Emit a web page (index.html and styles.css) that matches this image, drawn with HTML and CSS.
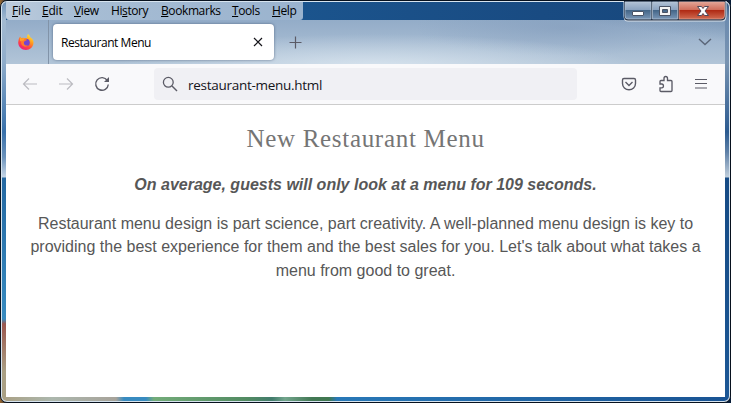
FILE: index.html
```html
<!DOCTYPE html>
<html lang="en">
<head>
<meta charset="utf-8">
<title>Restaurant Menu</title>
<link rel="stylesheet" href="styles.css">
</head>
<body>
<div class="window">
  <div class="glass">
    <header class="titlebar">
      <nav class="menubar">
        <span class="m-file"><u>F</u>ile</span>
        <span class="m-edit"><u>E</u>dit</span>
        <span class="m-view"><u>V</u>iew</span>
        <span class="m-history">Hi<u>s</u>tory</span>
        <span class="m-bookmarks"><u>B</u>ookmarks</span>
        <span class="m-tools"><u>T</u>ools</span>
        <span class="m-help"><u>H</u>elp</span>
      </nav>
      <svg class="controls" width="104" height="21" viewBox="0 0 104 21">
        <defs>
          <linearGradient id="blue" x2="0" y2="1"><stop offset="0" stop-color="#b0c1d5"/><stop offset=".46" stop-color="#8aa2bf"/><stop offset=".5" stop-color="#456789"/><stop offset="1" stop-color="#7895b5"/></linearGradient>
          <linearGradient id="red" x2="0" y2="1"><stop offset="0" stop-color="#e3a496"/><stop offset=".46" stop-color="#cf6d5a"/><stop offset=".5" stop-color="#b02b15"/><stop offset="1" stop-color="#d06a50"/></linearGradient>
        </defs>
        <path d="M.5 0V15Q.5 20.500 5 20.500H99Q103.500 20.500 103.500 15V0Z" fill="#d9e1ea"/>
        <path d="M1 0V15Q1 19.500 5 19.500H98Q102.500 19.500 102.500 15V0Z" fill="#26354a"/>
        <path d="M2 1H28V18H5Q2 18 2 15Z" fill="url(#blue)" stroke="#bccada" stroke-width=".7"/>
        <path d="M29.500 1H54.500V18H29.500Z" fill="url(#blue)" stroke="#bccada" stroke-width=".7"/>
        <path d="M56 1H101.500V15Q101.500 18 98 18H56Z" fill="url(#red)" stroke="#e2a99c" stroke-width=".7"/>
        <rect x="9.500" y="10.500" width="11" height="4" rx=".5" fill="#fff" stroke="#4a5365"/>
        <path d="M36.500 5.500H47.500V14.500H36.500ZM39.500 8.500V11.500H44.500V8.500Z" fill="#f4f4f4" fill-rule="evenodd" stroke="#4a5365"/>
        <path d="M74.500 5.500H78.500L80 7.500L81.500 5.500H85.500L82 10L85.500 14.500H81.500L80 12.500L78.500 14.500H74.500L78 10Z" fill="#fff" stroke="#514858"/>
      </svg>
    </header>
    <div class="tabs">
      <div class="pinned">
        <svg width="18" height="18" viewBox="0 0 18 18">
          <defs>
            <linearGradient id="flame" x1=".85" y1="0" x2=".25" y2="1"><stop stop-color="#fff43d"/><stop offset=".4" stop-color="#ff9a20"/><stop offset=".7" stop-color="#ff4541"/><stop offset="1" stop-color="#ec1885"/></linearGradient>
          </defs>
          <path d="M11 1Q13 2.500 13.500 4.500Q16.800 6.200 16.500 10C16.200 14 13 17 9 17C4.700 17 1.200 13.700 1.200 9.500Q1.200 6 3 3.500L4 5Q6 4.300 8 5L10 5Q9.800 2.500 11 1Z" fill="url(#flame)"/>
          <circle cx="9" cy="9.500" r="3.800" fill="#7543cf"/>
          <path d="M2.500 6Q5 4 8 6Q10 6.200 10 7Q8.500 8 7.500 8.200Q6.500 9.500 7 11Q8 13 11 12.500Q9.500 14.200 7.200 13.500Q4 12.500 4 9Z" fill="#ff792b"/>
          <path d="M3 4L4.500 5.500L7.500 5L6.500 7.500L3 8Z" fill="#ffa226"/>
        </svg>
      </div>
      <div class="tab">
        <span class="tab-title">Restaurant Menu</span>
        <svg width="10" height="10" viewBox="0 0 10 10"><path d="M1 1L9 9M9 1L1 9" fill="none" stroke="#15141a" stroke-width="1.200"/></svg>
      </div>
      <svg class="plus" width="13" height="13" viewBox="0 0 13 13"><path d="M6.500 .5V12.500M.5 6.500H12.500" stroke="#5b5b66" stroke-width="1.200"/></svg>
      <svg class="chevron" width="14" height="8" viewBox="0 0 14 8"><path d="M1 1L7 6.500L13 1" fill="none" stroke="#5b6678" stroke-width="1.400"/></svg>
    </div>
    <div class="toolbar">
      <svg class="back" width="16" height="14" viewBox="0 0 16 14"><path d="M15 7H1.500M7 1.500L1.500 7L7 12.500" fill="none" stroke="#bcbcc1" stroke-width="1.200"/></svg>
      <svg class="forward" width="16" height="14" viewBox="0 0 16 14"><path d="M1 7H14.500M9 1.500L14.500 7L9 12.500" fill="none" stroke="#bcbcc1" stroke-width="1.200"/></svg>
      <svg class="reload" width="16" height="16" viewBox="0 0 16 16"><path d="M13.300 4.500A6.300 6.300 0 1 0 14.300 8.500" fill="none" stroke="#5b5b66" stroke-width="1.400"/><path d="M15 1V6H10Z" fill="#5b5b66"/></svg>
      <div class="address">
        <svg width="16" height="16" viewBox="0 0 16 16"><circle cx="6.300" cy="6.300" r="4.900" fill="none" stroke="#5b5b66" stroke-width="1.300"/><path d="M10 10L15 15" stroke="#5b5b66" stroke-width="1.400"/></svg>
        <span class="url">restaurant-menu.html</span>
      </div>
      <svg class="pocket" width="16" height="16" viewBox="0 0 16 16"><path d="M3 2.500H13Q14.500 2.500 14.500 4V7.500A6.500 6.300 0 0 1 1.500 7.500V4Q1.500 2.500 3 2.500Z" fill="none" stroke="#5b5b66" stroke-width="1.400"/><path d="M4.500 6L8 9.400L11.500 6" fill="none" stroke="#5b5b66" stroke-width="1.400"/></svg>
      <svg class="puzzle" width="16" height="18" viewBox="0 0 16 18"><path d="M2 9V6.500Q2 5.500 3 5.500H6V3.500Q6 1.500 7.700 1.500Q9.500 1.500 9.500 3.500V5.500H13Q14 5.500 14 6.500V15.500Q14 16.500 13 16.500H3Q2 16.500 2 15.500V12.800H4Q5.500 12.500 5.500 11Q5.500 9.200 4 9Z" fill="none" stroke="#5b5b66" stroke-width="1.350"/></svg>
      <svg class="burger" width="12" height="12" viewBox="0 0 12 12"><path d="M0 1.500H12M0 5.500H12M0 10H12" stroke="#5b5b66" stroke-width="1.200"/></svg>
    </div>
    <main class="page">
      <h1>New Restaurant Menu</h1>
      <p class="lead">On average, guests will only look at a menu for 109 seconds.</p>
      <p>Restaurant menu design is part science, part creativity. A well-planned menu design is key to providing the best experience for them and the best sales for you. Let's talk about what takes a menu from good to great.</p>
    </main>
  </div>
</div>
</body>
</html>
```
FILE: styles.css
```css
* { box-sizing: border-box; }
body { margin: 0; background: linear-gradient(90deg, #9a682f, #071c38 8px); overflow: hidden; }
svg { display: block; flex: none; }
.window {
  width: 731px;
  height: 403px;
  border: 1px solid #07111e;
  border-radius: 7px;
  background: #d7e4ef;
  padding: 1px;
}
.glass {
  height: 399px;
  padding: 0 4px 4px;
  border-radius: 5px;
  background:
    linear-gradient(90deg, #aaa084 0, #acb7ad 50px, #a7a39a 114px, #388bc0 122px, #388bc0 144px, #73ac79 152px, #528b62 245px, #427c6c 270px, #72a58c 283px, #427854 310px, #407850 327px, #2878b7 335px, #195393 727px) 0 100% / 100% 4px no-repeat,
    linear-gradient(#6f94bb 0, #a3bad1 18px, #8facca 60px, #3870aa 130px, #6b92bb 155px, #c5d5e6 175px, #2468a2 176px, #388bc0 317px, #9b574e 322px, #aaa084 370px) 0 0 / 4px 100% no-repeat,
    linear-gradient(#30567f 0, #6c8baf 18px, #7893b1 60px, #2c5b90 130px, #5e80a7 150px, #c0cedb 175px, #164b85 176px, #1c5795 399px) 100% 0 / 4px 100% no-repeat,
    linear-gradient(90deg, #17518e, #1b548d 300px, #194b82 540px, #17477c);
}
.titlebar { display: flex; justify-content: space-between; height: 18px; }
.menubar {
  display: flex;
  width: 297px;
  height: 18px;
  padding-left: 6px;
  border-radius: 0 0 3px 3px;
  background: linear-gradient(90deg, #bdccdd, #a7bdd4 70px, #9ab3ce);
  font: 12px/18px "Open Sans", sans-serif;
  letter-spacing: -.4px;
  color: #000;
}
.menubar u { text-underline-offset: 1px; text-decoration-thickness: 1px; }
.m-file { width: 30px; letter-spacing: -.1px; }
.m-edit { width: 32px; letter-spacing: -.2px; }
.m-view { width: 37px; }
.m-history { width: 50px; }
.m-bookmarks { width: 71px; }
.m-tools { width: 40px; }
.controls { margin: -1px -2px 0 0; position: relative; }
.tabs {
  display: flex;
  align-items: center;
  height: 44px;
  background:
    radial-gradient(ellipse 260px 34px at 370px 48px, rgba(222, 233, 242, .85), rgba(222, 233, 242, 0)),
    radial-gradient(ellipse 150px 28px at 560px 8px, rgba(120, 146, 180, .4), rgba(120, 146, 180, 0)),
    linear-gradient(8deg, transparent 72%, rgba(107, 137, 171, .55)) 100% 0 / 260px 100% no-repeat,
    linear-gradient(#93acc8, #b2c5d8);
}
.pinned { display: flex; align-items: center; width: 43px; height: 44px; padding-left: 11px; border-right: 1px solid #8193a8; }
.tab {
  display: flex;
  align-items: center;
  justify-content: space-between;
  width: 221px;
  height: 36px;
  margin-left: 4px;
  padding: 0 11px 0 8px;
  border-radius: 4px;
  background: #fff;
  box-shadow: 0 0 3px rgba(40, 60, 90, .6);
  font: 12px/18px "Open Sans", sans-serif;
  letter-spacing: -.45px;
  color: #000;
}
.tab-title { padding-top: 2px; }
.plus { margin-left: 15px; }
.chevron { margin: 0 13px 0 auto; }
.toolbar {
  display: flex;
  align-items: center;
  height: 41px;
  background: #f9f9fb;
  border-bottom: 1px solid #ccc;
}
.back { margin-left: 16px; }
.forward { margin-left: 20px; }
.reload { margin-left: 20px; }
.address {
  display: flex;
  align-items: center;
  gap: 10px;
  width: 423px;
  height: 32px;
  margin-left: 44px;
  padding-left: 8px;
  border-radius: 4px;
  background: #f0f0f4;
  font: 13.5px/20px "Open Sans", sans-serif;
  letter-spacing: -.28px;
  color: #15141a;
}
.url { padding-top: 2px; }
.pocket { margin-left: 44px; }
.puzzle { margin-left: 21px; }
.burger { margin-left: 21px; }
.page {
  height: 292px;
  padding: 0 20px;
  background: #fff;
  color: #575757;
  font: 16px/23.500px "Liberation Sans", sans-serif;
  text-align: center;
  overflow: hidden;
}
h1 { margin: 20px 0 0; color: #757575; font: 25px/28px "Liberation Serif", serif; letter-spacing: .7px; }
p { margin: 0; }
.lead { margin: 20px 0 15px; font-weight: bold; font-style: italic; }
```
